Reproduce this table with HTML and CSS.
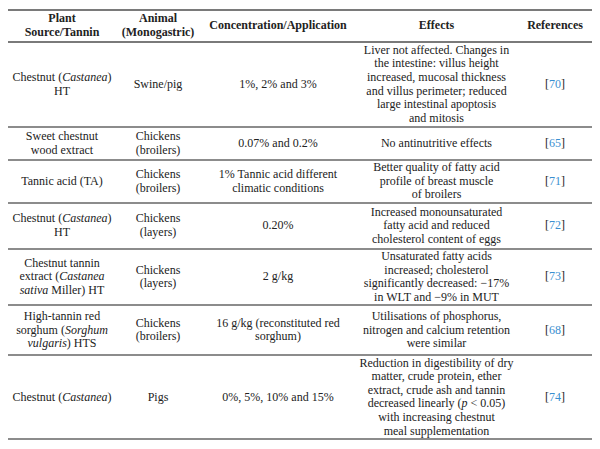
FILE: index.html
```html
<!DOCTYPE html>
<html>
<head>
<meta charset="utf-8">
<link rel="stylesheet" href="styles.css">
</head>
<body>
<table class="tbl">
  <colgroup>
    <col class="c1"><col class="c2"><col class="c3"><col class="c4"><col class="c5">
  </colgroup>
  <thead>
    <tr class="h">
      <th>Plant<br>Source/Tannin</th>
      <th>Animal<br>(Monogastric)</th>
      <th>Concentration/Application</th>
      <th>Effects</th>
      <th>References</th>
    </tr>
  </thead>
  <tbody>
    <tr class="r1">
      <td>Chestnut (<i>Castanea</i>)<br>HT</td>
      <td>Swine/pig</td>
      <td>1%, 2% and 3%</td>
      <td>Liver not affected. Changes in<br>the intestine: villus height<br>increased, mucosal thickness<br>and villus perimeter; reduced<br>large intestinal apoptosis<br>and mitosis</td>
      <td><span class="ref">[<a>70</a>]</span></td>
    </tr>
    <tr class="r2">
      <td>Sweet chestnut<br>wood extract</td>
      <td>Chickens<br>(broilers)</td>
      <td>0.07% and 0.2%</td>
      <td>No antinutritive effects</td>
      <td><span class="ref">[<a>65</a>]</span></td>
    </tr>
    <tr class="r3">
      <td>Tannic acid (TA)</td>
      <td>Chickens<br>(broilers)</td>
      <td>1% Tannic acid different<br>climatic conditions</td>
      <td>Better quality of fatty acid<br>profile of breast muscle<br>of broilers</td>
      <td><span class="ref">[<a>71</a>]</span></td>
    </tr>
    <tr class="r4">
      <td>Chestnut (<i>Castanea</i>)<br>HT</td>
      <td>Chickens<br>(layers)</td>
      <td>0.20%</td>
      <td>Increased monounsaturated<br>fatty acid and reduced<br>cholesterol content of eggs</td>
      <td><span class="ref">[<a>72</a>]</span></td>
    </tr>
    <tr class="r5">
      <td>Chestnut tannin<br>extract (<i>Castanea<br>sativa</i> Miller) HT</td>
      <td>Chickens<br>(layers)</td>
      <td>2 g/kg</td>
      <td>Unsaturated fatty acids<br>increased; cholesterol<br>significantly decreased: −17%<br>in WLT and −9% in MUT</td>
      <td><span class="ref">[<a>73</a>]</span></td>
    </tr>
    <tr class="r6">
      <td>High-tannin red<br>sorghum (<i>Sorghum<br>vulgaris</i>) HTS</td>
      <td>Chickens<br>(broilers)</td>
      <td>16 g/kg (reconstituted red<br>sorghum)</td>
      <td>Utilisations of phosphorus,<br>nitrogen and calcium retention<br>were similar</td>
      <td><span class="ref">[<a>68</a>]</span></td>
    </tr>
    <tr class="r7">
      <td>Chestnut (<i>Castanea</i>)</td>
      <td>Pigs</td>
      <td>0%, 5%, 10% and 15%</td>
      <td>Reduction in digestibility of dry<br>matter, crude protein, ether<br>extract, crude ash and tannin<br>decreased linearly (<i>p</i> &lt; 0.05)<br>with increasing chestnut<br>meal supplementation</td>
      <td><span class="ref">[<a>74</a>]</span></td>
    </tr>
  </tbody>
</table>
</body>
</html>
```
FILE: styles.css
```css
html, body {
  background: #ffffff;
}
body {
  margin: 9px 8px 0 8px;
  font-family: "Liberation Serif", serif;
  font-size: 12px;
  color: #222222;
}
.tbl {
  width: 585px;
  border-collapse: collapse;
  table-layout: fixed;
}
.c1 { width: 108px; }
.c2 { width: 84px; }
.c3 { width: 156px; }
.c4 { width: 161px; }
.c5 { width: 76px; }
.tbl th, .tbl td {
  text-align: center;
  vertical-align: middle;
  padding: 0 2px;
  line-height: 13.6px;
  border-bottom: 2px solid #8c8c8c;
}
.tbl thead tr {
  border-top: 2px solid #7a7a7a;
}
.tbl th {
  font-weight: bold;
  border-bottom-color: #7a7a7a;
}
.ref a {
  color: #3a8fd0;
}
.h th { height: 30px; }
.r1 td { height: 83px; }
.r2 td { height: 31px; }
.r3 td { height: 41px; }
.r4 td { height: 44px; }
.r5 td { height: 54px; }
.r6 td { height: 48px; }
.r7 td { height: 82px; }
```
